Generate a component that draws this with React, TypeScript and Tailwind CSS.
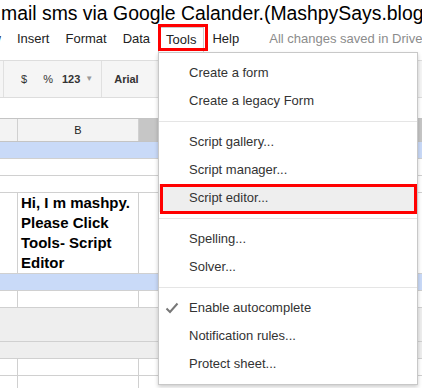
import type { FC, ReactNode } from "react";

const font = "font-['Liberation_Sans',Arial,sans-serif]";

interface MenuItemProps {
  children: ReactNode;
  checked?: boolean;
  active?: boolean;
}

const MenuItem: FC<MenuItemProps> = ({ children, checked, active }) => (
  <div className={`relative flex h-[28px] items-center pl-[6px] ${active ? "bg-[#eeeeee]" : ""}`}>
    <span className="flex w-[24px] items-center">
      {checked && (
        <svg width="14" height="12" viewBox="0 0 14 12" fill="none">
          <path d="M1.5 6.5 L5 10 L12.5 1.5" stroke="#777" strokeWidth={2} />
        </svg>
      )}
    </span>
    <span className="text-[13px] text-[#333]">{children}</span>
    {active && <div className="absolute left-[1px] right-0 top-0 h-[30px] border-[3px] border-[#ff0000]" />}
  </div>
);

const Sep: FC = () => <div className="my-[6px] h-px bg-[#e5e5e5]" />;

interface RowProps {
  h: string;
  bg?: string;
  lines?: boolean;
  children?: ReactNode;
}

const Row: FC<RowProps> = ({ h, bg = "bg-white", lines, children }) => (
  <div className={`flex border-b border-[#d0d0d0] ${h} ${bg}`}>
    {lines && (
      <>
        <div className="w-[18px] shrink-0 border-r border-[#d0d0d0]" />
        <div className="w-[121px] shrink-0 border-r border-[#d0d0d0] pl-[3px]">{children}</div>
        <div className="flex-1" />
      </>
    )}
  </div>
);

export default function App() {
  return (
    <div className={`relative h-[388px] w-[422px] overflow-hidden bg-white ${font}`}>
      {/* title */}
      <div className="h-[26px] whitespace-nowrap pl-[1px] text-[19.4px] leading-[26px] text-black">
        mail sms via Google Calander.(MashpySays.blog
      </div>

      {/* menu bar */}
      <div className="flex h-[26px] items-stretch whitespace-nowrap text-[13px] leading-[26px] text-[#222]">
        <span className="ml-[-35px] px-2">View</span>
        <span className="px-2">Insert</span>
        <span className="px-2">Format</span>
        <span className="px-2">Data</span>
        <span className="mt-px border-x border-t border-[#cccccc] bg-white px-[7px] leading-[24px]">Tools</span>
        <span className="px-2">Help</span>
        <span className="ml-[22px] text-[#8c8c8c]">All changes saved in Drive</span>
      </div>

      <div className="h-[8px]" />

      {/* toolbar */}
      <div className="flex h-[38px] items-center border-y border-[#dddddd] bg-[#f5f5f5] text-[11px] text-[#333]">
        <div className="ml-[3px] w-px self-stretch bg-[#e0e0e0]" />
        <span className="ml-[17px]">$</span>
        <span className="ml-[16px]">%</span>
        <span className="ml-[9px] font-bold">123</span>
        <span className="ml-[5px] text-[8px] text-[#999]">▼</span>
        <div className="ml-[8px] w-px self-stretch bg-[#e0e0e0]" />
        <span className="ml-[12px] font-bold">Arial</span>
      </div>

      {/* formula bar */}
      <div className="h-[20px]" />

      {/* column header */}
      <div className="flex h-[24px] border-y border-[#c4c4c4] bg-[#f3f3f3] text-[11px] text-[#222]">
        <div className="w-[18px] shrink-0 border-r border-[#d0d0d0]" />
        <div className="flex w-[121px] shrink-0 items-center justify-center border-r border-[#d0d0d0]">B</div>
        <div className="flex-1 bg-[#c6c6c6]" />
      </div>

      <Row h="h-[17px]" bg="bg-[#c9daf8]" />
      <Row h="h-[17px]" />
      <Row h="h-[17px]" />
      <Row h="h-[81px]" lines>
        <div className="pr-[2px] text-[15px] font-bold leading-[20px] text-black">
          Hi, I m mashpy. Please Click Tools- Script Editor
        </div>
      </Row>
      <Row h="h-[17px]" bg="bg-[#c9daf8]" />
      <Row h="h-[17px]" lines />
      <Row h="h-[34px]" bg="bg-[#eeeeee]" />
      <Row h="h-[17px]" bg="bg-[#eeeeee]" />
      <Row h="h-[17px]" lines />
      <Row h="h-[17px]" lines />

      {/* red highlight around Tools */}
      <div className="absolute left-[158px] top-[24px] h-[27px] w-[50px] border-[3px] border-[#ff0000]" />

      {/* Tools dropdown */}
      <div className="absolute left-[158px] top-[52px] w-[260px] border border-[#c8c8c8] bg-white py-[6px] shadow-[0_2px_4px_rgba(0,0,0,0.2)]">
        <MenuItem>Create a form</MenuItem>
        <MenuItem>Create a legacy Form</MenuItem>
        <Sep />
        <MenuItem>Script gallery...</MenuItem>
        <MenuItem>Script manager...</MenuItem>
        <MenuItem active>Script editor...</MenuItem>
        <Sep />
        <MenuItem>Spelling...</MenuItem>
        <MenuItem>Solver...</MenuItem>
        <Sep />
        <MenuItem checked>Enable autocomplete</MenuItem>
        <MenuItem>Notification rules...</MenuItem>
        <MenuItem>Protect sheet...</MenuItem>
      </div>
    </div>
  );
}
